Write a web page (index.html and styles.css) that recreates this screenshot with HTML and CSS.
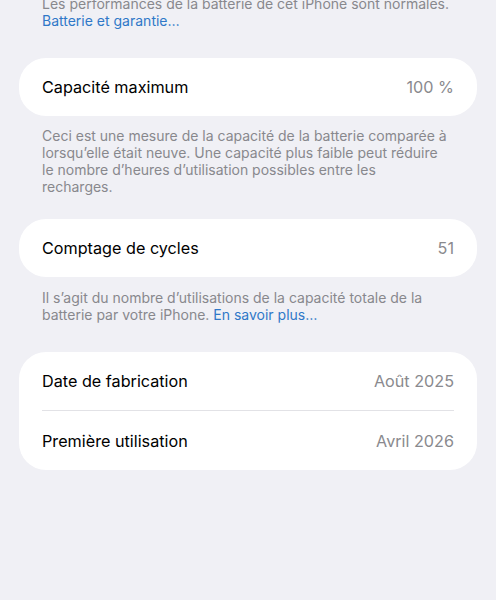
FILE: index.html
```html
<!DOCTYPE html>
<html lang="fr">
<head>
    <meta charset="UTF-8">
    <title>Batterie</title>
    <link rel="stylesheet" href="styles.css">
</head>
<body>
    <p class="note note-top">Les performances de la batterie de cet iPhone sont normales. <a href="#">Batterie et garantie…</a></p>

    <div class="card">
        <div class="row">
            <span class="label">Capacité maximum</span>
            <span class="value">100 %</span>
        </div>
    </div>
    <p class="note">Ceci est une mesure de la capacité de la batterie comparée à lorsqu’elle était neuve. Une capacité plus faible peut réduire le nombre d’heures d’utilisation possibles entre les<br>recharges.</p>

    <div class="card">
        <div class="row">
            <span class="label">Comptage de cycles</span>
            <span class="value">51</span>
        </div>
    </div>
    <p class="note note-last">Il s’agit du nombre d’utilisations de la capacité totale de la batterie par votre iPhone. <a href="#">En savoir plus…</a></p>

    <div class="card">
        <div class="row">
            <span class="label">Date de fabrication</span>
            <span class="value">Août 2025</span>
        </div>
        <div class="row">
            <span class="label">Première utilisation</span>
            <span class="value">Avril 2026</span>
        </div>
    </div>
</body>
</html>
```

FILE: styles.css
```css
body {
    margin: 0;
    padding: 0 19px;
    background-color: #f0f0f5;
    font-family: Inter, "Noto Sans", sans-serif;
    -webkit-font-smoothing: antialiased;
}
.note {
    margin: 11px 0 24px;
    padding: 0 28px 0 23px;
    font-size: 14px;
    line-height: 17px;
    color: #88888d;
}
.note-top {
    margin-top: -5px;
    margin-bottom: 29px;
    padding-right: 20px;
}
.note-last {
    margin-top: 12px;
    margin-bottom: 29px;
}
.note a {
    color: #2f78c8;
    text-decoration: none;
}
.card {
    background-color: #ffffff;
    border-radius: 27px;
    padding: 0 23px;
}
.row {
    display: flex;
    justify-content: space-between;
    align-items: center;
    height: 58px;
    font-size: 16.2px;
}
.row + .row {
    border-top: 1px solid #e2e2e6;
    height: 59px;
}
.label {
    color: #000000;
}
.value {
    color: #8a8a8e;
}
```
